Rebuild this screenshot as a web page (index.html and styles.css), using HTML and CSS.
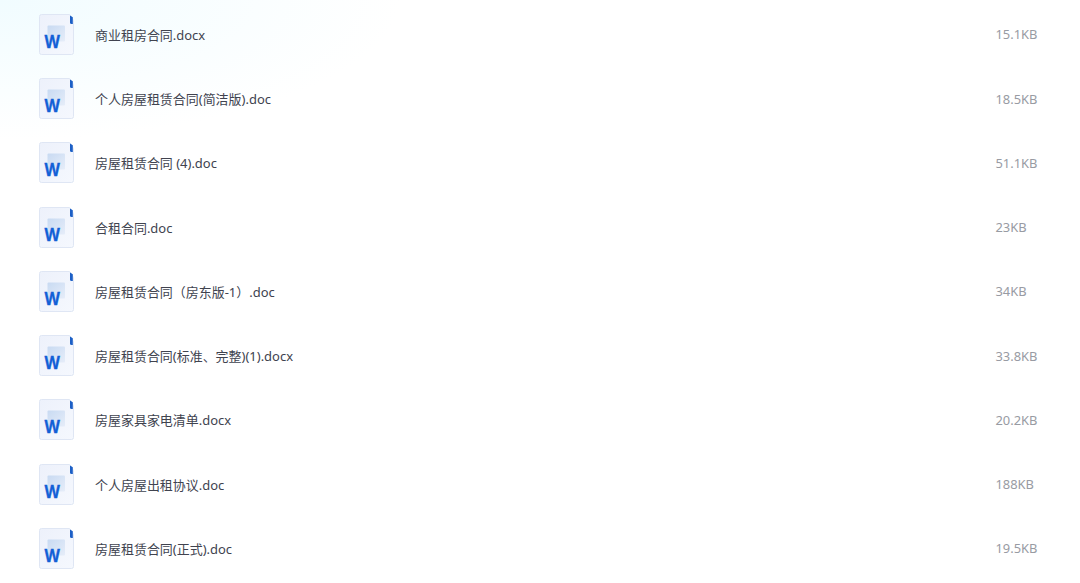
FILE: index.html
```html
<!DOCTYPE html>
<html lang="zh-CN">
<head>
<meta charset="UTF-8" />
<meta name="viewport" content="width=device-width, initial-scale=1" />
<title>租房合同</title>
<link rel="stylesheet" href="styles.css">
</head>
<body>
  <!-- shared word file icon -->
  <svg class="defs" width="0" height="0">
    <defs>
      <linearGradient id="page" x1="0" y1="0" x2="1" y2="1">
        <stop offset="0" stop-color="#edf1fb" />
        <stop offset="1" stop-color="#f5f8fe" />
      </linearGradient>
      <linearGradient id="block" x1="0" y1="0" x2="1" y2="1">
        <stop offset="0" stop-color="#c8daf2" />
        <stop offset="1" stop-color="#e6edf9" />
      </linearGradient>
    </defs>
    <symbol id="word" viewBox="0 0 35 41">
      <path d="M2.5 .5H30.5L34.5 6.5V38.5a2 2 0 0 1-2 2H2.5a2 2 0 0 1-2-2V2.5a2 2 0 0 1 2-2z" fill="url(#page)" stroke="#dfe6f4" />
      <path d="M31 1.6l2.8 1.6V10H32.5a1.5 1.5 0 0 1-1.5-1.5z" fill="#1c5fc6" />
      <rect x="8.5" y="11.5" width="17.5" height="16" rx="1" fill="url(#block)" />
    </symbol>
  </svg>

  <ul class="files">
    <li class="file"><svg class="icon"><use href="#word" /><text x="5.5" y="34" textLength="15.4" lengthAdjust="spacingAndGlyphs">W</text></svg><span class="name">商业租房合同.docx</span><span class="size">15.1KB</span></li>
    <li class="file"><svg class="icon"><use href="#word" /><text x="5.5" y="34" textLength="15.4" lengthAdjust="spacingAndGlyphs">W</text></svg><span class="name">个人房屋租赁合同(简洁版).doc</span><span class="size">18.5KB</span></li>
    <li class="file"><svg class="icon"><use href="#word" /><text x="5.5" y="34" textLength="15.4" lengthAdjust="spacingAndGlyphs">W</text></svg><span class="name">房屋租赁合同 (4).doc</span><span class="size">51.1KB</span></li>
    <li class="file"><svg class="icon"><use href="#word" /><text x="5.5" y="34" textLength="15.4" lengthAdjust="spacingAndGlyphs">W</text></svg><span class="name">合租合同.doc</span><span class="size">23KB</span></li>
    <li class="file"><svg class="icon"><use href="#word" /><text x="5.5" y="34" textLength="15.4" lengthAdjust="spacingAndGlyphs">W</text></svg><span class="name">房屋租赁合同（房东版-1）.doc</span><span class="size">34KB</span></li>
    <li class="file"><svg class="icon"><use href="#word" /><text x="5.5" y="34" textLength="15.4" lengthAdjust="spacingAndGlyphs">W</text></svg><span class="name">房屋租赁合同(标准、完整)(1).docx</span><span class="size">33.8KB</span></li>
    <li class="file"><svg class="icon"><use href="#word" /><text x="5.5" y="34" textLength="15.4" lengthAdjust="spacingAndGlyphs">W</text></svg><span class="name">房屋家具家电清单.docx</span><span class="size">20.2KB</span></li>
    <li class="file"><svg class="icon"><use href="#word" /><text x="5.5" y="34" textLength="15.4" lengthAdjust="spacingAndGlyphs">W</text></svg><span class="name">个人房屋出租协议.doc</span><span class="size">188KB</span></li>
    <li class="file"><svg class="icon"><use href="#word" /><text x="5.5" y="34" textLength="15.4" lengthAdjust="spacingAndGlyphs">W</text></svg><span class="name">房屋租赁合同(正式).doc</span><span class="size">19.5KB</span></li>
  </ul>
</body>
</html>
```
FILE: styles.css
```css
body {
  margin: 0;
  height: 583px;
  overflow: hidden;
  font-family: "Noto Sans", "Noto Sans CJK SC", sans-serif;
  font-size: 12.98px;
  color: #40434f;
  background: radial-gradient(ellipse 400px 140px at 0 0, #f1fcff, #fff) #fff;
}
.defs {
  position: absolute;
}
.files {
  list-style: none;
  margin: 0;
  padding: 2.2px 0 0 39px;
}
.file {
  display: flex;
  align-items: center;
  height: 64.25px;
}
.icon {
  width: 35px;
  height: 41px;
  margin-right: 21px;
}
.icon text {
  font-size: 17.5px;
  font-weight: 700;
  fill: #1260d6;
  stroke: #1260d6;
  stroke-width: .3px;
}
.name {
  flex: 1;
}
.size {
  width: 84.5px;
  font-size: 12.9px;
  color: #989ba3;
}
```
